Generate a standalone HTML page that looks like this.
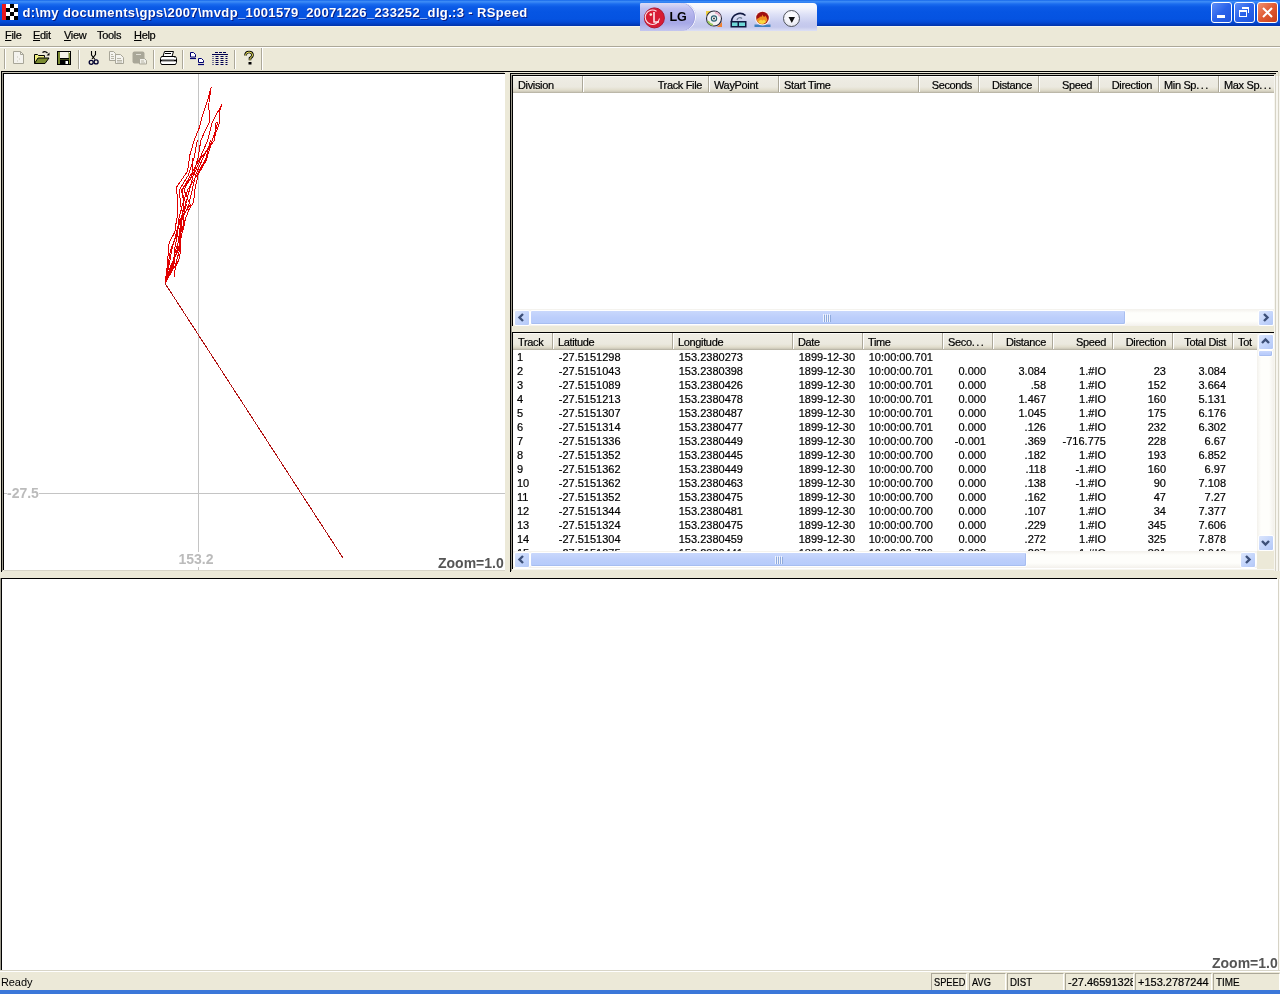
<!DOCTYPE html>
<html><head><meta charset="utf-8">
<style>
*{margin:0;padding:0;box-sizing:border-box}
html,body{will-change:transform;width:1280px;height:994px;overflow:hidden;background:#ECE9D8;font-family:"Liberation Sans",sans-serif;font-size:11px;color:#000}
.a{position:absolute}
#title{left:0;top:0;width:1280px;height:26px;background:linear-gradient(to bottom,#0a5ae6 0px,#3b8cf6 1px,#3a88f5 2px,#1a6cef 4px,#0b5ae6 7px,#0655e3 12px,#0553e1 19px,#044ad6 22px,#033fc2 24px,#0233a8 26px)}
#ttext{left:22.5px;top:4px;font-size:13px;font-weight:bold;color:#fff;letter-spacing:0.355px;white-space:nowrap;text-shadow:1px 1px 0 #0a1e84;line-height:18px}
.tb{top:2px;width:21px;height:21px;border:1px solid #fff;border-radius:3px}
.menu{top:28px;line-height:14px;letter-spacing:-0.3px;-webkit-text-stroke:0.2px #000}
.menu u{text-decoration:underline;text-decoration-thickness:1px;text-underline-offset:1px}
.sep{width:2px;border-left:1px solid #ACA899;border-right:1px solid #fff}
.panel{background:#fff}
.hdr{height:17px;background:linear-gradient(to bottom,#fbfaf6 0,#fbfaf6 1px,#efede4 1px,#ebe9df 11px,#e2decd 14px,#d6d2c2 15px,#cbc7b8 16px,#aca899 17px)}
.dv{position:absolute;top:0;height:16px;width:2px;border-left:1px solid #ACA899;border-right:1px solid #fff}
.hs{position:absolute;top:2px;line-height:14px;white-space:nowrap;letter-spacing:-0.35px;-webkit-text-stroke:0.2px #000}
.c{position:absolute;line-height:14px;white-space:nowrap;-webkit-text-stroke:0.2px #000}
.r{text-align:right}
.sb-h{height:17px;background:linear-gradient(to bottom,#f3f1ec 0,#fefefb 4px,#fefefb 12px,#f3f1ec 17px)}
.arr{position:absolute;width:16px;height:16px;border:1px solid #fff;border-radius:2px;background:linear-gradient(135deg,#dce6fc 0,#c1d3fb 60%,#b4c8f6 100%)}
.thumbh{position:absolute;height:15px;border:1px solid #fff;border-radius:2px;background:linear-gradient(to bottom,#c9d8fc 0,#bccefb 50%,#b5cbfb 100%);box-shadow:inset -1px -1px 0 #a8bef0}
.st{position:absolute;top:973px;padding-top:1px;-webkit-text-stroke:0.2px #000;height:17px;border-left:1px solid #ACA899;border-top:1px solid #ACA899;border-right:1px solid #fff;line-height:14px;padding-left:2px;white-space:nowrap}
.zoomtxt{font-size:14px;font-weight:bold;color:#555;white-space:nowrap;line-height:16px}
.axis{font-size:14px;font-weight:bold;color:#bbb;background:#fff;white-space:nowrap;line-height:15px}
</style></head><body>
<!-- title bar -->
<div id="title" class="a"></div>
<div class="a" style="left:2px;top:4px;width:4px;height:16px;background:#e8181c"></div>
<svg class="a" style="left:6px;top:4px" width="12" height="16" viewBox="0 0 12 16">
<rect width="12" height="16" fill="#fff"/>
<rect x="4" y="0" width="4" height="4" fill="#000"/>
<rect x="0" y="4" width="4" height="4" fill="#000"/><rect x="8" y="4" width="4" height="4" fill="#000"/>
<rect x="4" y="8" width="4" height="4" fill="#000"/>
<rect x="0" y="12" width="4" height="4" fill="#000"/><rect x="8" y="12" width="4" height="4" fill="#000"/>
</svg>
<div id="ttext" class="a">d:\my documents\gps\2007\mvdp_1001579_20071226_233252_dlg.:3 - RSpeed</div>

<!-- caption buttons -->
<div class="a tb" style="left:1211px;background:linear-gradient(135deg,#5e8ef8 0,#2a63ea 50%,#1e54dc 100%)"></div>
<div class="a" style="left:1217px;top:15px;width:8px;height:3px;background:#fff"></div>
<div class="a tb" style="left:1234px;background:linear-gradient(135deg,#5e8ef8 0,#2a63ea 50%,#1e54dc 100%)"></div>
<div class="a" style="left:1239px;top:10px;width:8px;height:7px;border:1px solid #fff;border-top-width:2px"></div>
<div class="a" style="left:1242px;top:7px;width:7px;height:6px;border-top:2px solid #fff;border-right:1px solid #fff"></div>
<div class="a tb" style="left:1257px;background:linear-gradient(135deg,#f09070 0,#e05a32 50%,#c8401c 100%)"></div>
<svg class="a" style="left:1261px;top:6px" width="13" height="13" viewBox="0 0 13 13"><path d="M2 2l9 9M11 2l-9 9" stroke="#fff" stroke-width="2"/></svg>

<!-- menu -->
<div class="a" style="left:0;top:26px;width:1280px;height:1px;background:#f5f4ee"></div>
<div class="a menu" style="left:5px"><u>F</u>ile</div>
<div class="a menu" style="left:33px"><u>E</u>dit</div>
<div class="a menu" style="left:64px"><u>V</u>iew</div>
<div class="a menu" style="left:97px">Tools</div>
<div class="a menu" style="left:134px"><u>H</u>elp</div>
<div class="a" style="left:0;top:46px;width:1280px;height:1px;background:#ACA899"></div>
<div class="a" style="left:0;top:47px;width:1280px;height:1px;background:#fff"></div>

<!-- LG bar -->
<div class="a" style="left:640px;top:3px;width:177px;height:28px;border-radius:2px 4px 0 0;background:linear-gradient(to bottom,#fbfbfe 0,#f4f4fc 5px,#dcdff6 12px,#c7cbee 20px,#c4c8ec 24px,#dde0f5 28px)"></div>
<div class="a" style="left:640px;top:3px;width:56px;height:28px;border-radius:2px 15px 15px 0;background:linear-gradient(to bottom,#dcdcf6 0,#bebef0 6px,#aeaeea 14px,#a6a8e6 20px,#c4c6ef 28px);box-shadow:inset -1px 0 0 #fff, inset -2px 0 0 #9c9ede"></div>
<svg class="a" style="left:643px;top:7px" width="23" height="22" viewBox="0 0 23 22">
 <circle cx="11.4" cy="10.9" r="10" fill="#d81c34"/>
 <circle cx="11.4" cy="10.9" r="10" fill="none" stroke="#b01830" stroke-width="1"/>
 <path d="M16.5 11.5a7.2 7.2 0 1 1 -3 -7.2" fill="none" stroke="#fbe6ea" stroke-width="1.1"/>
 <circle cx="7.8" cy="7.6" r="1.3" fill="#fff6d8"/>
 <path d="M11 5v10h5" fill="none" stroke="#fde8ec" stroke-width="1.6"/>
</svg>
<div class="a" style="left:669.5px;top:10px;font-size:12.5px;font-weight:bold;line-height:14px;color:#000;letter-spacing:-0.2px">LG</div>
<svg class="a" style="left:705px;top:10px" width="18" height="18" viewBox="0 0 18 18">
 <path d="M1 1h5l-5 5z" fill="#f0d040"/><path d="M17 17h-5l5-5z" fill="#f08030"/>
 <circle cx="9" cy="8.5" r="7.5" fill="#f2f0f4" stroke="#2a2a3a" stroke-width="1.1"/>
 <path d="M3 11a6.5 6.5 0 0 0 5 4" stroke="#9ccc60" stroke-width="2" fill="none"/>
 <path d="M10 2.5a6 6 0 0 1 5 4" stroke="#e8b0c8" stroke-width="2" fill="none"/>
 <circle cx="9" cy="8.5" r="2.6" fill="#fff" stroke="#2a6070" stroke-width="1.2"/>
 <circle cx="9" cy="8.5" r="0.9" fill="#222"/>
</svg>
<svg class="a" style="left:730px;top:10px" width="17" height="18" viewBox="0 0 17 18">
 <path d="M1.5 11.5a8.5 8.5 0 0 1 14-6" stroke="#101840" stroke-width="1.6" fill="none"/>
 <path d="M7 10a3 3 0 0 1 5-1.5" stroke="#6a7a90" stroke-width="1.2" fill="none"/>
 <rect x="0.5" y="11" width="16" height="6.5" fill="#101840"/>
 <rect x="2" y="12.5" width="5.5" height="3.5" fill="#70d8d8"/>
 <rect x="9" y="12.5" width="6" height="3.5" fill="#70d8d8"/>
</svg>
<svg class="a" style="left:754px;top:10px" width="17" height="18" viewBox="0 0 17 18">
 <rect x="0.5" y="14.5" width="16" height="2.5" fill="#4080c0"/>
 <circle cx="8.5" cy="8" r="7.5" fill="#f8eef0"/>
 <circle cx="8.5" cy="8" r="6.3" fill="#a01010"/>
 <path d="M2.5 10c1.5-3 3-1 3.5-4 1 2 1.5 1 2.5-1.5 0.5 2.5 2.5 3 2.5 1 1 1 2 2 2.5 4.5a6 6 0 0 1 -11 0z" fill="#f09020"/>
 <path d="M4 12c1-2 2-1 3-2.5 1 1.5 2 1 3 0 1 1 1.5 1.5 2 2.5a5 5 0 0 1 -8 0z" fill="#f8d840"/>
</svg>
<div class="a" style="left:783px;top:10px;width:17px;height:17px;border-radius:50%;border:1px solid #50545c;background:radial-gradient(circle at 50% 35%,#ffffff 0,#f4f4fa 50%,#d8dae6 100%)"></div>
<svg class="a" style="left:788px;top:16px" width="8" height="8" viewBox="0 0 8 8"><path d="M0.5 1h6.5l-3.2 6z" fill="#111"/></svg>

<!-- toolbar -->
<div class="a" style="left:4px;top:49px;width:2px;height:20px;border-left:1px solid #ACA899;border-right:1px solid #fff"></div>
<div class="a sep" style="left:78px;top:50px;height:19px"></div>
<div class="a sep" style="left:153px;top:50px;height:19px"></div>
<div class="a sep" style="left:182px;top:50px;height:19px"></div>
<div class="a sep" style="left:234px;top:50px;height:19px"></div>
<div class="a sep" style="left:261px;top:48px;height:22px"></div>
<svg class="a" style="left:0;top:44px" width="262" height="26" viewBox="0 44 262 26">
 <!-- new (disabled) -->
 <path d="M13.5 51.5h7l3 3v9h-10z" fill="#f4f3ee" stroke="#a8a698"/>
 <path d="M20.5 51.5v3h3" fill="none" stroke="#a8a698"/>
 <path d="M17 57h1M19 59h1M17 61h1" stroke="#c8c6b8"/>
 <!-- open -->
 <path d="M34.5 63.5v-9h3l1 1h6v2" fill="#f0f080" stroke="#000"/>
 <path d="M35 57h9v1h-6l-3 5z" fill="#f0f080"/>
 <path d="M34.5 63.5l3.5-5.5h11l-4 5.5z" fill="#7a8a30" stroke="#000"/>
 <path d="M42.5 52.5q2.5-2 5 0.5" fill="none" stroke="#000" stroke-width="1.2"/>
 <path d="M46.5 55.5h3v-3z" fill="#000"/>
 <!-- save -->
 <rect x="57.5" y="51.5" width="13" height="13" fill="#7a8a30" stroke="#000"/>
 <rect x="60" y="52" width="8.5" height="6" fill="#f4f2e8"/>
 <path d="M60 58.5h9" stroke="#000"/>
 <rect x="60" y="59.5" width="9" height="5" fill="#000"/><rect x="65.5" y="61" width="2.5" height="3" fill="#fff"/>
 <rect x="69" y="52" width="1" height="1" fill="#fff"/>
 <!-- cut -->
 <path d="M91.5 51v4l3.5 4.5M95.5 51v3.5l-3.5 4.5" fill="none" stroke="#000" stroke-width="1.1"/>
 <circle cx="91.2" cy="62.3" r="2" fill="none" stroke="#000030" stroke-width="1.3"/>
 <circle cx="96.1" cy="61.9" r="2" fill="none" stroke="#000030" stroke-width="1.3"/>
 <!-- copy disabled -->
 <path d="M109.5 51.5h4l2 2v7h-6z" fill="#f4f3ee" stroke="#a8a698"/>
 <path d="M111 54.5h2M111 56.5h3M111 58.5h3" stroke="#b8b6a8"/>
 <path d="M115.5 54.5h5l3 3v6h-8z" fill="#f4f3ee" stroke="#a8a698"/>
 <path d="M117 58.5h4M117 60.5h5M117 62h5" stroke="#b8b6a8"/>
 <!-- paste disabled -->
 <rect x="132.5" y="51.5" width="12" height="12" rx="2" fill="#a9a798"/>
 <path d="M136 54.5h5" stroke="#e0ded4"/>
 <path d="M139.5 58.5h5l2 2v3.5h-7z" fill="#f0efe8" stroke="#a9a798"/>
 <path d="M141 61h3M141 63h4" stroke="#b8b6a8"/>
 <!-- print -->
 <path d="M164.5 51.5h9l-1.5 5h-9z" fill="#fff" stroke="#000"/>
 <path d="M165 53.5h6" stroke="#000"/>
 <path d="M161.5 56.5h14l1 2v4l-1 2h-14l-1-2v-4z" fill="#fff" stroke="#000"/>
 <path d="M161 60.5h15" stroke="#000" stroke-width="1.6"/>
 <rect x="162" y="59.5" width="12" height="1" fill="#888"/>
 <path d="M174 57.5h1" stroke="#999"/>
 <!-- two docs -->
 <path d="M190.5 52.5h3l2 2v2.5h-5z" fill="#fff" stroke="#000070"/><path d="M190 58.5h6" stroke="#000070" stroke-width="1.2"/>
 <path d="M198.5 58.5h3l2 2v2h-5z" fill="#fff" stroke="#000070"/><path d="M198 64.5h6" stroke="#000070" stroke-width="1.2"/>
 <!-- grid -->
 <path d="M215 52.5h12" stroke="#000050" stroke-dasharray="3 1"/>
 <path d="M212 54.5h16" stroke="#000050"/>
 <path d="M212.5 56.5h15M212.5 58.5h15M212.5 60.5h15M212.5 62.5h15M212.5 64.5h15" stroke="#000050" stroke-dasharray="1 2 3 2 3 2 3"/>
 <!-- help -->
 <path d="M245.5 55.5q0-3.5 3.5-3.5t3.5 3q0 2-2.5 3.2v2" fill="none" stroke="#000" stroke-width="2.6"/>
 <path d="M245.5 55.5q0-3.5 3.5-3.5t3.5 3q0 2-2.5 3.2v2" fill="none" stroke="#f8f060" stroke-width="1"/>
 <rect x="248.5" y="62" width="3" height="2.5" fill="#000"/>
</svg>

<!-- panel frame lines -->
<div class="a" style="left:1px;top:71px;width:1277px;height:1px;background:#000"></div>
<!-- left map panel -->
<div class="a" style="left:1px;top:71px;width:1px;height:501px;background:#000"></div>
<div class="a" style="left:2px;top:72px;width:1px;height:499px;background:#9d9a8d"></div>
<div class="a" style="left:2px;top:72px;width:502px;height:1px;background:#c9c6b8"></div>
<div class="a" style="left:3px;top:73px;width:502px;height:1px;background:#000"></div>
<div class="a" style="left:3px;top:73px;width:1px;height:497px;background:#000"></div>
<div class="a panel" style="left:4px;top:74px;width:501px;height:496px;overflow:hidden">
 <svg class="a" style="left:0;top:0" width="501" height="496" viewBox="4 74 501 496">
  <path d="M198.5 74v496M4 493.5h501" stroke="#c4c4c4" stroke-width="1"/>
  <g fill="none" stroke="#e00000" stroke-width="1" shape-rendering="crispEdges">
   <polyline points="211.3,86.5 207.6,100.5 202.8,114.4 199.1,128.3 194.3,139.7 189.9,154.9 188.1,167.6 187.0,172.0 176.7,187.0 177.3,201.0 177.9,214.0 175.5,226.0 174.9,232.0 170.5,240.0 168.1,246.0 168.1,255.0 166.9,269.0 165.1,283.0"/>
   <polyline points="222.0,104.2 220.0,110.2 219.7,122.2 217.2,129.5 212.4,139.7 206.2,160.3 198.0,175.0 194.8,190.0 193.6,202.1 188.8,209.9 185.2,219.6 183.4,228.6 180.3,238.3 180.8,246.0 179.6,258.1 175.3,267.2 174.1,277.4"/>
   <polyline points="211.3,86.5 208.8,104.0 209.4,122.0 200.9,140.0 198.0,158.0 193.2,175.0 189.4,190.0 185.5,205.0 180.2,220.0 176.6,235.0 170.6,250.0 168.0,265.0 165.1,283.0"/>
   <polyline points="222.0,104.2 212.3,122.0 207.8,140.0 200.0,158.0 190.8,175.0 182.1,190.0 183.9,205.0 181.0,220.0 179.1,235.0 177.0,250.0 173.0,265.0 165.1,283.0"/>
   <polyline points="218.1,122.0 212.4,140.0 203.0,158.0 195.6,175.0 192.2,190.0 188.7,205.0 181.8,220.0 180.8,235.0 175.7,250.0 172.0,265.0 165.1,283.0"/>
   <polyline points="210.6,140.0 206.0,158.0 197.0,175.0 187.6,190.0 182.3,205.0 178.6,220.0 177.4,235.0 174.4,250.0 174.0,265.0 165.1,283.0"/>
   <polyline points="197.4,140.0 194.0,158.0 188.4,175.0 179.3,190.0 180.7,205.0 183.8,220.0 181.7,235.0 178.2,250.0 171.0,265.0 165.1,283.0"/>
   <polyline points="193.0,158.0 192.0,175.0 183.9,190.0 190.3,205.0 179.4,220.0 175.7,235.0 171.8,250.0 169.0,265.0 165.1,283.0"/>
   <polyline points="216.1,122.0 214.7,140.0 201.0,158.0 193.8,175.0 181.1,190.0 186.3,205.0 181.8,220.0 179.9,235.0 179.5,250.0 175.5,265.0 165.1,283.0"/>
   <polyline points="165.1,283.5 343,558" stroke="#b01010"/>
  </g>
 </svg>
 <div class="a axis" style="left:3px;top:412px">-27.5</div>
 <div class="a axis" style="left:174.5px;top:478px">153.2</div>
 <div class="a zoomtxt" style="left:434px;top:481px">Zoom=1.0</div>
</div>
<div class="a" style="left:4px;top:570px;width:501px;height:1px;background:#d8d5c8"></div>

<!-- right side frame -->
<div class="a" style="left:510px;top:73px;width:1px;height:499px;background:#000"></div>
<div class="a" style="left:511px;top:74px;width:1px;height:497px;background:#9d9a8d"></div>
<div class="a" style="left:510px;top:73px;width:766px;height:1px;background:#000"></div>
<div class="a" style="left:511px;top:74px;width:764px;height:1px;background:#c9c6b8"></div>
<div class="a" style="left:512px;top:75px;width:762px;height:1px;background:#000"></div>
<div class="a" style="left:512px;top:75px;width:1px;height:251px;background:#000"></div>

<!-- upper table -->
<div class="a panel" style="left:513px;top:76px;width:761px;height:250px;overflow:hidden">
 <div class="a hdr" style="left:0;top:0;width:761px">
<span class="hs" style="left:5px">Division</span>
<div class="dv" style="left:69px"></div>
<span class="hs" style="left:69px;width:120px;text-align:right">Track File</span>
<div class="dv" style="left:195px"></div>
<span class="hs" style="left:201px">WayPoint</span>
<div class="dv" style="left:265px"></div>
<span class="hs" style="left:271px">Start Time</span>
<div class="dv" style="left:405px"></div>
<span class="hs" style="left:405px;width:54px;text-align:right">Seconds</span>
<div class="dv" style="left:465px"></div>
<span class="hs" style="left:465px;width:54px;text-align:right">Distance</span>
<div class="dv" style="left:525px"></div>
<span class="hs" style="left:525px;width:54px;text-align:right">Speed</span>
<div class="dv" style="left:585px"></div>
<span class="hs" style="left:585px;width:54px;text-align:right">Direction</span>
<div class="dv" style="left:645px"></div>
<span class="hs" style="left:651px">Min Sp<span style="letter-spacing:1.5px">...</span></span>
<div class="dv" style="left:705px"></div>
<span class="hs" style="left:711px">Max Sp<span style="letter-spacing:1.5px">...</span></span>
<div class="dv" style="left:761px"></div>
 </div>
 <div class="a sb-h" style="left:0;top:233px;width:761px"></div>
 <div class="arr" style="left:1px;top:234px"><svg width="13" height="13" viewBox="0 0 13 13"><path d="M8 3L4.5 6.5 8 10" fill="none" stroke="#3d5079" stroke-width="2.4"/></svg></div>
 <div class="thumbh" style="left:17px;top:234px;width:596px"><svg style="position:absolute;left:292px;top:3px" width="8" height="8"><path d="M.5 0v8M2.5 0v8M4.5 0v8M6.5 0v8" stroke="#eef3fe"/><path d="M1.5 1v8M3.5 1v8M5.5 1v8M7.5 1v8" stroke="#8faadc"/></svg></div>
 <div class="arr" style="left:745px;top:234px"><svg width="13" height="13" viewBox="0 0 13 13"><path d="M5 3l3.5 3.5L5 10" fill="none" stroke="#3d5079" stroke-width="2.4"/></svg></div>
</div>

<!-- lower table -->
<div class="a" style="left:512px;top:332px;width:762px;height:1px;background:#000"></div>
<div class="a" style="left:512px;top:332px;width:1px;height:237px;background:#000"></div>
<div class="a panel" style="left:513px;top:333px;width:761px;height:236px;overflow:hidden">
 <div class="a" style="left:0;top:0;width:744px;height:218px;overflow:hidden">
  <div class="a hdr" style="left:0;top:0;width:744px">
<span class="hs" style="left:5px">Track</span>
<div class="dv" style="left:39px"></div>
<span class="hs" style="left:45px">Latitude</span>
<div class="dv" style="left:159px"></div>
<span class="hs" style="left:165px">Longitude</span>
<div class="dv" style="left:279px"></div>
<span class="hs" style="left:285px">Date</span>
<div class="dv" style="left:349px"></div>
<span class="hs" style="left:355px">Time</span>
<div class="dv" style="left:429px"></div>
<span class="hs" style="left:435px">Seco<span style="letter-spacing:1.5px">...</span></span>
<div class="dv" style="left:479px"></div>
<span class="hs" style="left:479px;width:54px;text-align:right">Distance</span>
<div class="dv" style="left:539px"></div>
<span class="hs" style="left:539px;width:54px;text-align:right">Speed</span>
<div class="dv" style="left:599px"></div>
<span class="hs" style="left:599px;width:54px;text-align:right">Direction</span>
<div class="dv" style="left:659px"></div>
<span class="hs" style="left:659px;width:54px;text-align:right">Total Dist</span>
<div class="dv" style="left:719px"></div>
<span class="hs" style="left:725px">Tot</span>
<div class="dv" style="left:779px"></div>
  </div>
  <div class="a" style="left:0;top:17px;width:744px;height:201px;overflow:hidden">
<div class="c" style="left:4px;top:0px">1</div>
<div class="c" style="left:45.75px;top:0px">-27.5151298</div>
<div class="c" style="left:165.75px;top:0px">153.2380273</div>
<div class="c" style="left:285.75px;top:0px">1899-12-30</div>
<div class="c" style="left:355.75px;top:0px">10:00:00.701</div>
<div class="c" style="left:4px;top:14px">2</div>
<div class="c" style="left:45.75px;top:14px">-27.5151043</div>
<div class="c" style="left:165.75px;top:14px">153.2380398</div>
<div class="c" style="left:285.75px;top:14px">1899-12-30</div>
<div class="c" style="left:355.75px;top:14px">10:00:00.701</div>
<div class="c r" style="left:429px;width:44px;top:14px">0.000</div>
<div class="c r" style="left:479px;width:54px;top:14px">3.084</div>
<div class="c r" style="left:539px;width:54px;top:14px">1.#IO</div>
<div class="c r" style="left:599px;width:54px;top:14px">23</div>
<div class="c r" style="left:659px;width:54px;top:14px">3.084</div>
<div class="c" style="left:4px;top:28px">3</div>
<div class="c" style="left:45.75px;top:28px">-27.5151089</div>
<div class="c" style="left:165.75px;top:28px">153.2380426</div>
<div class="c" style="left:285.75px;top:28px">1899-12-30</div>
<div class="c" style="left:355.75px;top:28px">10:00:00.701</div>
<div class="c r" style="left:429px;width:44px;top:28px">0.000</div>
<div class="c r" style="left:479px;width:54px;top:28px">.58</div>
<div class="c r" style="left:539px;width:54px;top:28px">1.#IO</div>
<div class="c r" style="left:599px;width:54px;top:28px">152</div>
<div class="c r" style="left:659px;width:54px;top:28px">3.664</div>
<div class="c" style="left:4px;top:42px">4</div>
<div class="c" style="left:45.75px;top:42px">-27.5151213</div>
<div class="c" style="left:165.75px;top:42px">153.2380478</div>
<div class="c" style="left:285.75px;top:42px">1899-12-30</div>
<div class="c" style="left:355.75px;top:42px">10:00:00.701</div>
<div class="c r" style="left:429px;width:44px;top:42px">0.000</div>
<div class="c r" style="left:479px;width:54px;top:42px">1.467</div>
<div class="c r" style="left:539px;width:54px;top:42px">1.#IO</div>
<div class="c r" style="left:599px;width:54px;top:42px">160</div>
<div class="c r" style="left:659px;width:54px;top:42px">5.131</div>
<div class="c" style="left:4px;top:56px">5</div>
<div class="c" style="left:45.75px;top:56px">-27.5151307</div>
<div class="c" style="left:165.75px;top:56px">153.2380487</div>
<div class="c" style="left:285.75px;top:56px">1899-12-30</div>
<div class="c" style="left:355.75px;top:56px">10:00:00.701</div>
<div class="c r" style="left:429px;width:44px;top:56px">0.000</div>
<div class="c r" style="left:479px;width:54px;top:56px">1.045</div>
<div class="c r" style="left:539px;width:54px;top:56px">1.#IO</div>
<div class="c r" style="left:599px;width:54px;top:56px">175</div>
<div class="c r" style="left:659px;width:54px;top:56px">6.176</div>
<div class="c" style="left:4px;top:70px">6</div>
<div class="c" style="left:45.75px;top:70px">-27.5151314</div>
<div class="c" style="left:165.75px;top:70px">153.2380477</div>
<div class="c" style="left:285.75px;top:70px">1899-12-30</div>
<div class="c" style="left:355.75px;top:70px">10:00:00.701</div>
<div class="c r" style="left:429px;width:44px;top:70px">0.000</div>
<div class="c r" style="left:479px;width:54px;top:70px">.126</div>
<div class="c r" style="left:539px;width:54px;top:70px">1.#IO</div>
<div class="c r" style="left:599px;width:54px;top:70px">232</div>
<div class="c r" style="left:659px;width:54px;top:70px">6.302</div>
<div class="c" style="left:4px;top:84px">7</div>
<div class="c" style="left:45.75px;top:84px">-27.5151336</div>
<div class="c" style="left:165.75px;top:84px">153.2380449</div>
<div class="c" style="left:285.75px;top:84px">1899-12-30</div>
<div class="c" style="left:355.75px;top:84px">10:00:00.700</div>
<div class="c r" style="left:429px;width:44px;top:84px">-0.001</div>
<div class="c r" style="left:479px;width:54px;top:84px">.369</div>
<div class="c r" style="left:539px;width:54px;top:84px">-716.775</div>
<div class="c r" style="left:599px;width:54px;top:84px">228</div>
<div class="c r" style="left:659px;width:54px;top:84px">6.67</div>
<div class="c" style="left:4px;top:98px">8</div>
<div class="c" style="left:45.75px;top:98px">-27.5151352</div>
<div class="c" style="left:165.75px;top:98px">153.2380445</div>
<div class="c" style="left:285.75px;top:98px">1899-12-30</div>
<div class="c" style="left:355.75px;top:98px">10:00:00.700</div>
<div class="c r" style="left:429px;width:44px;top:98px">0.000</div>
<div class="c r" style="left:479px;width:54px;top:98px">.182</div>
<div class="c r" style="left:539px;width:54px;top:98px">1.#IO</div>
<div class="c r" style="left:599px;width:54px;top:98px">193</div>
<div class="c r" style="left:659px;width:54px;top:98px">6.852</div>
<div class="c" style="left:4px;top:112px">9</div>
<div class="c" style="left:45.75px;top:112px">-27.5151362</div>
<div class="c" style="left:165.75px;top:112px">153.2380449</div>
<div class="c" style="left:285.75px;top:112px">1899-12-30</div>
<div class="c" style="left:355.75px;top:112px">10:00:00.700</div>
<div class="c r" style="left:429px;width:44px;top:112px">0.000</div>
<div class="c r" style="left:479px;width:54px;top:112px">.118</div>
<div class="c r" style="left:539px;width:54px;top:112px">-1.#IO</div>
<div class="c r" style="left:599px;width:54px;top:112px">160</div>
<div class="c r" style="left:659px;width:54px;top:112px">6.97</div>
<div class="c" style="left:4px;top:126px">10</div>
<div class="c" style="left:45.75px;top:126px">-27.5151362</div>
<div class="c" style="left:165.75px;top:126px">153.2380463</div>
<div class="c" style="left:285.75px;top:126px">1899-12-30</div>
<div class="c" style="left:355.75px;top:126px">10:00:00.700</div>
<div class="c r" style="left:429px;width:44px;top:126px">0.000</div>
<div class="c r" style="left:479px;width:54px;top:126px">.138</div>
<div class="c r" style="left:539px;width:54px;top:126px">-1.#IO</div>
<div class="c r" style="left:599px;width:54px;top:126px">90</div>
<div class="c r" style="left:659px;width:54px;top:126px">7.108</div>
<div class="c" style="left:4px;top:140px">11</div>
<div class="c" style="left:45.75px;top:140px">-27.5151352</div>
<div class="c" style="left:165.75px;top:140px">153.2380475</div>
<div class="c" style="left:285.75px;top:140px">1899-12-30</div>
<div class="c" style="left:355.75px;top:140px">10:00:00.700</div>
<div class="c r" style="left:429px;width:44px;top:140px">0.000</div>
<div class="c r" style="left:479px;width:54px;top:140px">.162</div>
<div class="c r" style="left:539px;width:54px;top:140px">1.#IO</div>
<div class="c r" style="left:599px;width:54px;top:140px">47</div>
<div class="c r" style="left:659px;width:54px;top:140px">7.27</div>
<div class="c" style="left:4px;top:154px">12</div>
<div class="c" style="left:45.75px;top:154px">-27.5151344</div>
<div class="c" style="left:165.75px;top:154px">153.2380481</div>
<div class="c" style="left:285.75px;top:154px">1899-12-30</div>
<div class="c" style="left:355.75px;top:154px">10:00:00.700</div>
<div class="c r" style="left:429px;width:44px;top:154px">0.000</div>
<div class="c r" style="left:479px;width:54px;top:154px">.107</div>
<div class="c r" style="left:539px;width:54px;top:154px">1.#IO</div>
<div class="c r" style="left:599px;width:54px;top:154px">34</div>
<div class="c r" style="left:659px;width:54px;top:154px">7.377</div>
<div class="c" style="left:4px;top:168px">13</div>
<div class="c" style="left:45.75px;top:168px">-27.5151324</div>
<div class="c" style="left:165.75px;top:168px">153.2380475</div>
<div class="c" style="left:285.75px;top:168px">1899-12-30</div>
<div class="c" style="left:355.75px;top:168px">10:00:00.700</div>
<div class="c r" style="left:429px;width:44px;top:168px">0.000</div>
<div class="c r" style="left:479px;width:54px;top:168px">.229</div>
<div class="c r" style="left:539px;width:54px;top:168px">1.#IO</div>
<div class="c r" style="left:599px;width:54px;top:168px">345</div>
<div class="c r" style="left:659px;width:54px;top:168px">7.606</div>
<div class="c" style="left:4px;top:182px">14</div>
<div class="c" style="left:45.75px;top:182px">-27.5151304</div>
<div class="c" style="left:165.75px;top:182px">153.2380459</div>
<div class="c" style="left:285.75px;top:182px">1899-12-30</div>
<div class="c" style="left:355.75px;top:182px">10:00:00.700</div>
<div class="c r" style="left:429px;width:44px;top:182px">0.000</div>
<div class="c r" style="left:479px;width:54px;top:182px">.272</div>
<div class="c r" style="left:539px;width:54px;top:182px">1.#IO</div>
<div class="c r" style="left:599px;width:54px;top:182px">325</div>
<div class="c r" style="left:659px;width:54px;top:182px">7.878</div>
<div class="c" style="left:4px;top:196px">15</div>
<div class="c" style="left:45.75px;top:196px">-27.5151275</div>
<div class="c" style="left:165.75px;top:196px">153.2380441</div>
<div class="c" style="left:285.75px;top:196px">1899-12-30</div>
<div class="c" style="left:355.75px;top:196px">10:00:00.700</div>
<div class="c r" style="left:429px;width:44px;top:196px">0.000</div>
<div class="c r" style="left:479px;width:54px;top:196px">.267</div>
<div class="c r" style="left:539px;width:54px;top:196px">1.#IO</div>
<div class="c r" style="left:599px;width:54px;top:196px">301</div>
<div class="c r" style="left:659px;width:54px;top:196px">8.046</div>
  </div>
 </div>
 <!-- v scrollbar -->
 <div class="a" style="left:744px;top:0;width:17px;height:218px;background:linear-gradient(to right,#f3f1ec 0,#fefefb 4px,#fefefb 12px,#f3f1ec 17px)"></div>
 <div class="arr" style="left:745px;top:1px"><svg width="13" height="13" viewBox="0 0 13 13"><path d="M3 8l3.5-3.5L10 8" fill="none" stroke="#3d5079" stroke-width="2.4"/></svg></div>
 <div class="thumbh" style="left:745px;top:17px;width:15px;height:7px"></div>
 <div class="arr" style="left:745px;top:202px"><svg width="13" height="13" viewBox="0 0 13 13"><path d="M3 5l3.5 3.5L10 5" fill="none" stroke="#3d5079" stroke-width="2.4"/></svg></div>
 <!-- h scrollbar -->
 <div class="a sb-h" style="left:0;top:218px;width:744px"></div>
 <div class="arr" style="left:1px;top:219px"><svg width="13" height="13" viewBox="0 0 13 13"><path d="M8 3L4.5 6.5 8 10" fill="none" stroke="#3d5079" stroke-width="2.4"/></svg></div>
 <div class="thumbh" style="left:17px;top:219px;width:497px"><svg style="position:absolute;left:244px;top:3px" width="8" height="8"><path d="M.5 0v8M2.5 0v8M4.5 0v8M6.5 0v8" stroke="#eef3fe"/><path d="M1.5 1v8M3.5 1v8M5.5 1v8M7.5 1v8" stroke="#8faadc"/></svg></div>
 <div class="arr" style="left:727px;top:219px"><svg width="13" height="13" viewBox="0 0 13 13"><path d="M5 3l3.5 3.5L5 10" fill="none" stroke="#3d5079" stroke-width="2.4"/></svg></div>
 <div class="a" style="left:744px;top:218px;width:17px;height:18px;background:#ECE9D8"></div>
</div>
<div class="a" style="left:1274px;top:76px;width:6px;height:495px;background:#f7f6f0"></div>
<div class="a" style="left:1275px;top:74px;width:1px;height:497px;background:#d6d3c6"></div>
<div class="a" style="left:1278px;top:72px;width:1px;height:499px;background:#d6d3c6"></div>
<div class="a" style="left:513px;top:569px;width:762px;height:1px;background:#f6f5ef"></div>

<!-- bottom panel -->
<div class="a" style="left:0;top:578px;width:1px;height:393px;background:#9d9a8d"></div>
<div class="a" style="left:1px;top:578px;width:1276px;height:1px;background:#000"></div>
<div class="a" style="left:1px;top:578px;width:1px;height:392px;background:#000"></div>
<div class="a panel" style="left:2px;top:579px;width:1276px;height:391px;overflow:hidden">
 <div class="a zoomtxt" style="left:1210px;top:376px">Zoom=1.0</div>
</div>
<div class="a" style="left:1278px;top:579px;width:1px;height:391px;background:#d6d3c6"></div><div class="a" style="left:1279px;top:579px;width:1px;height:391px;background:#fbfaf6"></div>
<div class="a" style="left:0;top:970px;width:1280px;height:1px;background:#d8d5c8"></div>
<div class="a" style="left:0;top:971px;width:1280px;height:1px;background:#fff"></div>

<!-- status bar -->
<div class="a" style="left:1px;top:975px;line-height:14px;letter-spacing:-0.1px">Ready</div>
<div class="st" style="left:931px;width:36px"><span style="display:inline-block;transform:scaleX(0.84);transform-origin:0 0">SPEED</span></div>
<div class="st" style="left:969px;width:37px"><span style="display:inline-block;transform:scaleX(0.84);transform-origin:0 0">AVG</span></div>
<div class="st" style="left:1007px;width:57px"><span style="display:inline-block;transform:scaleX(0.88);transform-origin:0 0">DIST</span></div>
<div class="st" style="left:1065px;width:69px;overflow:hidden">-27.4659132&#8203;8</div>
<div class="st" style="left:1135px;width:77px">+153.2787244</div>
<div class="st" style="left:1213px;width:67px"><span style="display:inline-block;transform:scaleX(0.9);transform-origin:0 0">TIME</span></div>
<div class="a" style="left:0;top:990px;width:1280px;height:4px;background:#3b77d9"></div>
</body></html>
